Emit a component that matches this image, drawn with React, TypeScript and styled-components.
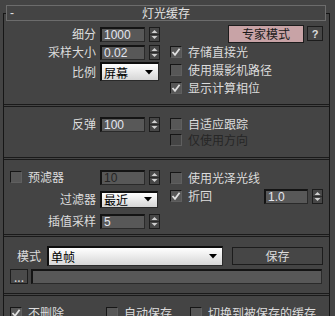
import React from 'react';
import styled, { createGlobalStyle } from 'styled-components';

const Global = createGlobalStyle`
  html, body { margin: 0; padding: 0; background: #444444; }
  body {
    font-family: "Noto Sans CJK SC", "Liberation Sans", sans-serif;
    font-size: 12px;
    color: #dcdcdc;
  }
  * { box-sizing: border-box; }
`;

const Page = styled.div`
  width: 335px;
  height: 316px;
  overflow: hidden;
  background: #444444;
  padding-top: 13px;
`;

const Frame = styled.div`
  margin-left: 3px;
  width: 327px;
  border-left: 1px solid #161616;
  border-right: 1px solid #161616;
  border-top: 1px solid #161616;
  height: 400px;
`;

const Header = styled.div`
  margin: -9px 3px 0 2px;
  height: 16px;
  border: 1px solid #6c6c6c;
  background: #444444;
  display: grid;
  grid-template-columns: 20px 1fr 20px;
  align-items: center;
  line-height: 14px;
  color: #e2e2e2;
`;

const Minus = styled.span`
  padding-left: 3px;
  font-family: "Liberation Sans", sans-serif;
  font-size: 12px;
`;

const Title = styled.span`
  text-align: center;
`;

const Divider = styled.div`
  height: 3px;
  border-top: 1px solid #1a1a1a;
  border-bottom: 1px solid #1a1a1a;
`;

const Section = styled.div<{ $h: number }>`
  height: ${(p) => p.$h}px;
  display: grid;
  grid-template-columns: 162px 1fr;
`;

const Block = styled.div<{ $h: number; $pt: number }>`
  height: ${(p) => p.$h}px;
  padding-top: ${(p) => p.$pt}px;
  display: flex;
  flex-direction: column;
`;

const Col = styled.div<{ $pt: number }>`
  display: flex;
  flex-direction: column;
  padding-top: ${(p) => p.$pt}px;
`;

const Row = styled.div<{ $h: number; $pl?: number; $gap?: number }>`
  height: ${(p) => p.$h}px;
  display: flex;
  align-items: center;
  padding-left: ${(p) => p.$pl ?? 0}px;
  gap: ${(p) => p.$gap ?? 0}px;
  flex-shrink: 0;
`;

const Label = styled.span`
  width: 92px;
  margin-right: 4px;
  text-align: right;
  white-space: nowrap;
  flex-shrink: 0;
  line-height: 14px;
`;

const CheckLabel = styled.span<{ $disabled?: boolean; $w?: number }>`
  display: flex;
  align-items: center;
  white-space: nowrap;
  line-height: 14px;
  color: ${(p) => (p.$disabled ? '#262626' : '#dcdcdc')};
  width: ${(p) => (p.$w ? `${p.$w}px` : 'auto')};
  flex-shrink: 0;
`;

const CheckText = styled.span`
  margin-left: 6px;
`;

const Box = styled.span<{ $disabled?: boolean }>`
  width: 12px;
  height: 12px;
  flex-shrink: 0;
  display: inline-flex;
  align-items: center;
  justify-content: center;
  background: ${(p) => (p.$disabled ? '#454545' : '#575757')};
  border-top: 1px solid #161616;
  border-left: 1px solid #161616;
  border-right: 1px solid #5f5f5f;
  border-bottom: 1px solid #5f5f5f;
`;

const NumField = styled.div<{ $disabled?: boolean; $w?: number }>`
  width: ${(p) => p.$w ?? 45}px;
  height: 15px;
  background: #585858;
  border-top: 2px solid #141414;
  border-left: 2px solid #141414;
  border-right: 1px solid #2a2a2a;
  border-bottom: 1px solid #2a2a2a;
  font-family: "Liberation Sans", sans-serif;
  font-size: 12px;
  line-height: 12px;
  padding-left: 2px;
  color: ${(p) => (p.$disabled ? '#242424' : '#e4e6f0')};
  flex-shrink: 0;
`;

const SpinBox = styled.span`
  width: 11px;
  height: 15px;
  margin-left: 4px;
  flex-shrink: 0;
  display: inline-flex;
  background: #474747;
  border: 1px solid #1c1c1c;
`;

const Dropdown = styled.div<{ $w: number; $h: number }>`
  width: ${(p) => p.$w}px;
  height: ${(p) => p.$h}px;
  background: linear-gradient(#ffffff, #d6d6d6);
  border-top: 2px solid #0e0e0e;
  border-left: 2px solid #0e0e0e;
  border-right: 1px solid #2a2a2a;
  border-bottom: 1px solid #2a2a2a;
  color: #000;
  display: flex;
  align-items: center;
  justify-content: space-between;
  padding: 0 5px 0 2px;
  font-size: 12px;
  flex-shrink: 0;
`;

const Button = styled.div<{ $w: number; $h: number; $bg?: string; $fg?: string }>`
  width: ${(p) => p.$w}px;
  height: ${(p) => p.$h}px;
  background: ${(p) => p.$bg ?? '#464646'};
  color: ${(p) => p.$fg ?? '#dcdcdc'};
  border: 1px solid #1c1c1c;
  display: flex;
  align-items: center;
  justify-content: center;
  line-height: 12px;
  flex-shrink: 0;
`;

const Help = styled(Button)`
  font-family: "Liberation Sans", sans-serif;
  font-weight: bold;
  font-size: 11px;
`;

const LongField = styled.div`
  width: 291px;
  height: 15px;
  background: #585858;
  border-top: 2px solid #141414;
  border-left: 2px solid #141414;
  border-right: 1px solid #2a2a2a;
  border-bottom: 1px solid #2a2a2a;
`;

const ExpertRow = styled.div`
  height: 19px;
  display: flex;
  align-items: center;
  justify-content: flex-end;
  padding-right: 6px;
  gap: 3px;
`;

const RightCheck = styled.div<{ $h: number }>`
  height: ${(p) => p.$h}px;
  display: flex;
  align-items: center;
  padding-left: 4px;
  padding-right: 6px;
`;

const Push = styled.span`
  flex: 1;
`;

function Check({ on, disabled }: { on?: boolean; disabled?: boolean }) {
  return (
    <Box $disabled={disabled}>
      {on && (
        <svg width="10" height="10" viewBox="0 0 10 10">
          <path d="M1.5 5 L4 7.8 L8.6 1.8" fill="none" stroke="#e0e0e0" strokeWidth="1.8" />
        </svg>
      )}
    </Box>
  );
}

function CheckItem({
  on,
  disabled,
  text,
  w,
}: {
  on?: boolean;
  disabled?: boolean;
  text: string;
  w?: number;
}) {
  return (
    <CheckLabel $disabled={disabled} $w={w}>
      <Check on={on} disabled={disabled} />
      <CheckText>{text}</CheckText>
    </CheckLabel>
  );
}

function Spinner() {
  return (
    <SpinBox>
      <svg width="9" height="13" viewBox="0 0 9 13">
        <path d="M1.5 5 L7.5 5 L4.5 2 Z" fill="#cfcfcf" />
        <line x1="0" y1="6.5" x2="9" y2="6.5" stroke="#2a2a2a" strokeWidth="1" />
        <path d="M1.5 8 L7.5 8 L4.5 11 Z" fill="#cfcfcf" />
      </svg>
    </SpinBox>
  );
}

function Arrow() {
  return (
    <svg width="8" height="5" viewBox="0 0 8 5">
      <path d="M0 0 L8 0 L4 4.5 Z" fill="#000" />
    </svg>
  );
}

export default function App() {
  return (
    <>
      <Global />
      <Page>
        <Frame>
          <Header>
            <Minus>-</Minus>
            <Title>灯光缓存</Title>
            <span />
          </Header>

          <Section $h={83}>
            <Col $pt={4}>
              <Row $h={18}>
                <Label>细分</Label>
                <NumField>1000</NumField>
                <Spinner />
              </Row>
              <Row $h={18}>
                <Label>采样大小</Label>
                <NumField>0.02</NumField>
                <Spinner />
              </Row>
              <Row $h={21}>
                <Label>比例</Label>
                <Dropdown $w={59} $h={19}>
                  <span>屏幕</span>
                  <Arrow />
                </Dropdown>
              </Row>
            </Col>
            <Col $pt={3}>
              <ExpertRow>
                <Button $w={76} $h={18} $bg="#c8a3a6" $fg="#1a1a1a">
                  专家模式
                </Button>
                <Help $w={16} $h={15}>?</Help>
              </ExpertRow>
              <RightCheck $h={18}>
                <CheckItem on text="存储直接光" />
              </RightCheck>
              <RightCheck $h={18}>
                <CheckItem text="使用摄影机路径" />
              </RightCheck>
              <RightCheck $h={18}>
                <CheckItem on text="显示计算相位" />
              </RightCheck>
            </Col>
          </Section>

          <Divider />

          <Section $h={50}>
            <Col $pt={8}>
              <Row $h={18}>
                <Label>反弹</Label>
                <NumField>100</NumField>
                <Spinner />
              </Row>
            </Col>
            <Col $pt={9}>
              <RightCheck $h={16}>
                <CheckItem text="自适应跟踪" />
              </RightCheck>
              <RightCheck $h={16}>
                <CheckItem disabled text="仅使用方向" />
              </RightCheck>
            </Col>
          </Section>

          <Divider />

          <Section $h={74}>
            <Col $pt={8}>
              <Row $h={18} $pl={6}>
                <CheckItem text="预滤器" w={90} />
                <NumField $disabled>10</NumField>
                <Spinner />
              </Row>
              <Row $h={26}>
                <Label>过滤器</Label>
                <Dropdown $w={58} $h={17}>
                  <span>最近</span>
                  <Arrow />
                </Dropdown>
              </Row>
              <Row $h={18}>
                <Label>插值采样</Label>
                <NumField>5</NumField>
                <Spinner />
              </Row>
            </Col>
            <Col $pt={10}>
              <RightCheck $h={16}>
                <CheckItem text="使用光泽光线" />
              </RightCheck>
              <RightCheck $h={20}>
                <CheckItem on text="折回" />
                <Push />
                <NumField $w={44}>1.0</NumField>
                <Spinner />
              </RightCheck>
            </Col>
          </Section>

          <Divider />

          <Block $h={56} $pt={9}>
            <Row $h={19} $pl={13}>
              <span>模式</span>
              <Dropdown $w={176} $h={20} style={{ marginLeft: 6 }}>
                <span>单帧</span>
                <Arrow />
              </Dropdown>
              <Button $w={91} $h={18} style={{ marginLeft: 9 }}>
                保存
              </Button>
            </Row>
            <Row $h={15} $pl={6} $gap={3} style={{ marginTop: 4 }}>
              <Button $w={18} $h={15} $bg="#4a4a4a">
                ...
              </Button>
              <LongField />
            </Row>
          </Block>

          <Divider />

          <Block $h={40} $pt={10}>
            <Row $h={14} $pl={6}>
              <CheckItem on text="不删除" w={96} />
              <CheckItem text="自动保存" w={84} />
              <CheckItem text="切换到被保存的缓存" />
            </Row>
          </Block>
        </Frame>
      </Page>
    </>
  );
}
